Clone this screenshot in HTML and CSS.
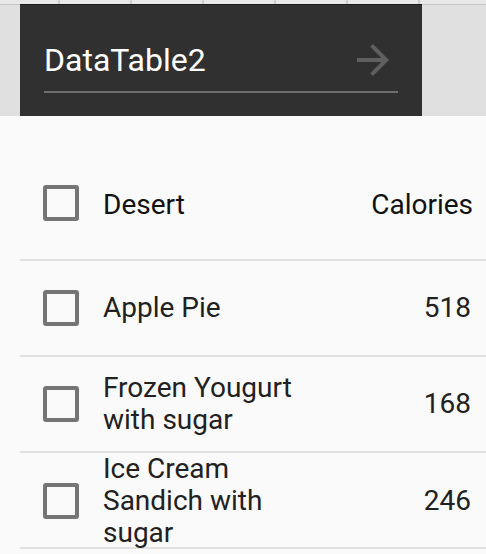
FILE: index.html
```html
<!DOCTYPE html>
<html>
<head>
<meta charset="utf-8">
<link rel="stylesheet" href="styles.css">
</head>
<body>
<div class="strip"></div>
<div class="appbar-area">
  <div class="panel">
    <div class="field">
      <span class="title">DataTable2</span>
      <svg class="arrow" viewBox="0 0 24 24" width="48" height="48"><path d="M12 4l-1.41 1.41L16.17 11H4v2h12.17l-5.58 5.59L12 20l8-8z" fill="#5f5f5f"/></svg>
    </div>
    <div class="underline"></div>
  </div>
</div>
<div class="table">
  <div class="row head">
    <span class="cb"></span>
    <span class="desc">Desert</span>
    <span class="num">Calories</span>
  </div>
  <div class="row">
    <span class="cb"></span>
    <span class="desc">Apple Pie</span>
    <span class="num">518</span>
  </div>
  <div class="row">
    <span class="cb"></span>
    <span class="desc">Frozen Yougurt with sugar</span>
    <span class="num">168</span>
  </div>
  <div class="row">
    <span class="cb"></span>
    <span class="desc">Ice Cream Sandich with sugar</span>
    <span class="num">246</span>
  </div>
</div>
</body>
</html>
```
FILE: styles.css
```css
html, body {
  margin: 0;
  padding: 0;
  background: #fafafa;
  font-family: Roboto, "Noto Sans", sans-serif;
  overflow: hidden;
}
.strip {
  height: 4px;
  background-color: #e8e8e8;
  background-image: linear-gradient(to right, #cdcdcd 0, #cdcdcd 2px, transparent 2px);
  background-size: 72px 100%;
  background-position: 58px 0;
}
.appbar-area {
  height: 111px;
  border-top: 1px solid #c6c6c6;
  background: #e0e0e0;
  display: flex;
}
.panel {
  margin-left: 20px;
  width: 402px;
  box-sizing: border-box;
  margin-top: -1px;
  border-top: 1px solid #1a1a1a;
  background: #303030;
  padding: 31px 24px 0 24px;
}
.field {
  height: 48px;
  display: flex;
  align-items: center;
  justify-content: space-between;
}
.title {
  color: #ffffff;
  font-size: 32px;
  line-height: normal;
}
.arrow {
  display: block;
  margin-right: 1px;
}
.underline {
  margin-top: 7px;
  height: 2px;
  background: #6e6e6e;
}
.table {
  margin-left: 20px;
  padding-top: 31px;
}
.row {
  display: grid;
  grid-template-columns: 36px 200px 1fr;
  column-gap: 24px;
  align-items: center;
  height: 94px;
  padding-left: 23px;
  padding-right: 13px;
  border-bottom: 2px solid #e0e0e0;
  font-size: 28px;
  line-height: 32px;
  color: #212121;
}
.row.head {
  height: 112px;
  color: #111111;
}
.row.head .desc,
.row.head .num {
  padding-top: 3px;
}
.cb {
  display: block;
  width: 36px;
  height: 36px;
  box-sizing: border-box;
  border: 4px solid #757575;
  border-radius: 3px;
}
.num {
  text-align: right;
  white-space: nowrap;
  padding-right: 2px;
}
.row.head .num {
  padding-right: 0;
}
```
